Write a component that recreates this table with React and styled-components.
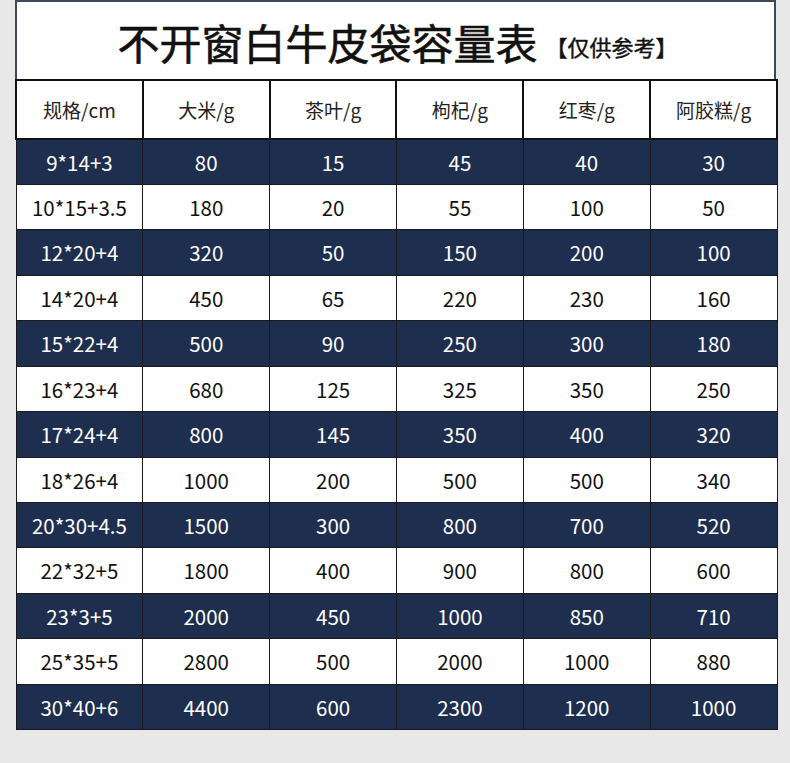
import React from "react";
import styled, { createGlobalStyle } from "styled-components";

const Global = createGlobalStyle`
  html, body { margin: 0; padding: 0; background: #e8e8e8; }
  body { font-family: "Noto Sans CJK SC", "Noto Sans", sans-serif; }
`;

const Page = styled.div`
  width: 790px;
  height: 763px;
  padding-left: 15px;
  box-sizing: border-box;
  background: #e8e8e8;
`;

const TitleBox = styled.div`
  width: 761px;
  height: 79px;
  box-sizing: border-box;
  border: 2px solid #3e4a5c;
  border-bottom: none;
  background: #fff;
  display: flex;
  align-items: center;
  justify-content: center;
  gap: 8px;
  padding-top: 2px;
  padding-left: 4px;
`;

const Title = styled.span`
  font-size: 42px;
  font-weight: 400;
  -webkit-text-stroke: 0.6px #111;
  color: #111;
  line-height: 1;
`;

const Note = styled.span`
  font-size: 22px;
  font-weight: 400;
  -webkit-text-stroke: 0.4px #111;
  color: #111;
  margin-top: 8px;
  line-height: 1;
`;

const Table = styled.table`
  width: 763px;
  border-collapse: collapse;
  table-layout: fixed;
`;

const HeadCell = styled.th`
  height: 57px;
  border: 2px solid #111;
  background: #fff;
  color: #222;
  font-size: 19px;
  font-weight: 400;
  text-align: center;
  padding: 0;
`;

const Row = styled.tr`
  height: 45.45px;
  background: ${(p) => (p.$dark ? "#1e2e4f" : "#fff")};
  color: ${(p) => (p.$dark ? "#fff" : "#111")};
`;

const Cell = styled.td`
  border: 1.5px solid #1a1a1a;
  font-size: 20.5px;
  text-align: center;
  padding: 0;
  line-height: 1;
`;

const headers = ["规格/cm", "大米/g", "茶叶/g", "枸杞/g", "红枣/g", "阿胶糕/g"];
const rows = [
  ["9*14+3", 80, 15, 45, 40, 30],
  ["10*15+3.5", 180, 20, 55, 100, 50],
  ["12*20+4", 320, 50, 150, 200, 100],
  ["14*20+4", 450, 65, 220, 230, 160],
  ["15*22+4", 500, 90, 250, 300, 180],
  ["16*23+4", 680, 125, 325, 350, 250],
  ["17*24+4", 800, 145, 350, 400, 320],
  ["18*26+4", 1000, 200, 500, 500, 340],
  ["20*30+4.5", 1500, 300, 800, 700, 520],
  ["22*32+5", 1800, 400, 900, 800, 600],
  ["23*3+5", 2000, 450, 1000, 850, 710],
  ["25*35+5", 2800, 500, 2000, 1000, 880],
  ["30*40+6", 4400, 600, 2300, 1200, 1000],
];

export default function App() {
  return (
    <Page>
      <Global />
      <TitleBox>
        <Title>不开窗白牛皮袋容量表</Title>
        <Note>【仅供参考】</Note>
      </TitleBox>
      <Table>
        <thead>
          <tr>
            {headers.map((h) => (
              <HeadCell key={h}>{h}</HeadCell>
            ))}
          </tr>
        </thead>
        <tbody>
          {rows.map((r, i) => (
            <Row key={i} $dark={i % 2 === 0}>
              {r.map((c, j) => (
                <Cell key={j}>{c}</Cell>
              ))}
            </Row>
          ))}
        </tbody>
      </Table>
    </Page>
  );
}
